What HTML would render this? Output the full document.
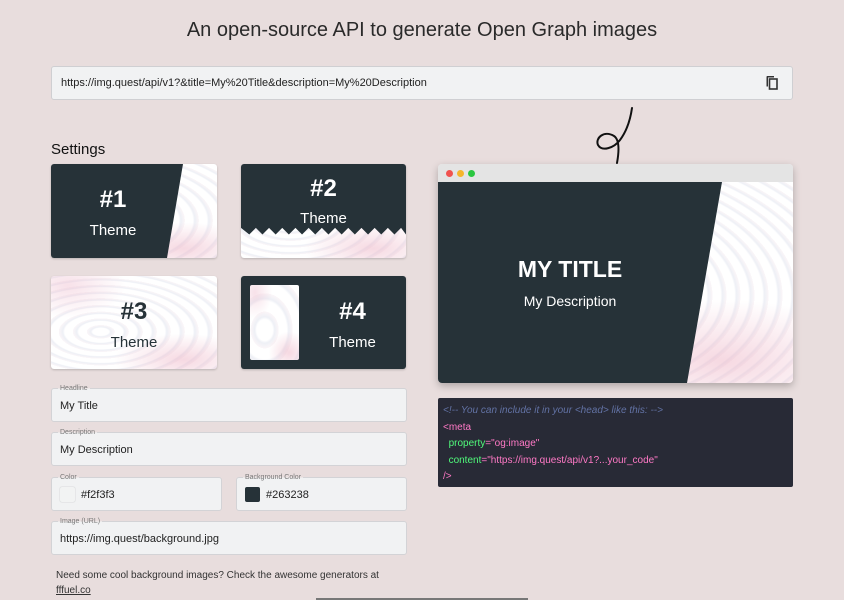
<!DOCTYPE html>
<html><head><meta charset="utf-8"><style>
*{box-sizing:border-box;margin:0;padding:0}
body{width:844px;height:600px;overflow:hidden;background:#e8dddd;font-family:"Liberation Sans",sans-serif;position:relative;color:#222}
.abs{position:absolute}
h1{position:absolute;top:19px;left:0;width:844px;text-align:center;font-weight:400;font-size:20px;color:#2a2a2a}
.url{left:51px;top:66px;width:742px;height:34px;background:#f1f2f3;border:1px solid #cfcfd2;border-radius:3px;font-size:11px;line-height:32px;padding-left:9px;color:#222}
.wave{background:
radial-gradient(ellipse 60% 40% at 80% 90%,rgba(235,170,190,.45),transparent 70%),
radial-gradient(ellipse 50% 50% at 10% 10%,rgba(236,180,200,.4),transparent 70%),
repeating-radial-gradient(ellipse at 30% 60%,#fff 0 8px,#eef0f6 10px,#fbf6f8 14px),#fff}
.card{border-radius:3px;overflow:hidden;box-shadow:0 1px 2px rgba(0,0,0,.2)}
.dark{background:#263238;color:#fff}
.num{position:absolute;width:100%;text-align:center;font-weight:700;font-size:24px}
.th{position:absolute;width:100%;text-align:center;font-size:15px}
.field{position:absolute;background:#f1f2f3;border:1px solid #d3d3d6;border-radius:3px;font-size:11px;padding-left:8px;color:#222;line-height:34px}
.field label{position:absolute;top:-5px;left:6px;font-size:7px;line-height:9px;height:9px;color:#777;background:linear-gradient(#e8dddd 50%,#f1f2f3 50%);padding:0 2px}
.sw{display:inline-block;width:15px;height:15px;border-radius:2px;vertical-align:middle;margin:-2px 6px 0 0}
.code{left:438px;top:398px;width:355px;height:89px;background:#282a36;border-radius:2px;font-size:10px;padding:5px 5px;line-height:16.5px}
</style></head><body>
<h1>An open-source API to generate Open Graph images</h1>
<div class="abs url">https://img.quest/api/v1?&amp;title=My%20Title&amp;description=My%20Description
<svg class="abs" style="left:713px;top:8px" width="14" height="16" viewBox="0 0 14 16"><path d="M2 1h7v1.5H3v9H1.5V2.5Q1.5 1 2 1z" fill="#333"/><rect x="4.5" y="4" width="7.5" height="10" fill="none" stroke="#333" stroke-width="1.6"/></svg></div>
<svg class="abs" style="left:590px;top:100px" width="50" height="70"><path d="M42 8C40 22 36 32 30 40C24 48 12 52 8 45C5 38 14 30 24 36C30 40 29 52 27 63" fill="none" stroke="#111" stroke-width="2" stroke-linecap="round"/></svg>
<div class="abs" style="left:51px;top:141px;font-size:15px;color:#111">Settings</div>
<div class="abs card wave" style="left:51px;top:164px;width:166px;height:94px">
<div class="abs dark" style="left:0;top:0;width:100%;height:100%;clip-path:polygon(0 0,132px 0,116px 100%,0 100%)"></div>
<div class="num" style="top:22px;width:124px;color:#fff">#1</div><div class="th" style="top:58px;width:124px;color:#fff">Theme</div></div>
<div class="abs card wave" style="left:241px;top:164px;width:165px;height:94px">
<div class="abs dark" style="left:0;top:0;width:100%;height:100%;clip-path:polygon(0 0,100% 0,100% 75%,97% 68%,93% 75%,89% 68%,85% 75%,81% 68%,77% 75%,73% 68%,69% 75%,65% 68%,61% 75%,57% 68%,53% 75%,49% 68%,45% 75%,41% 68%,37% 75%,33% 68%,29% 75%,25% 68%,21% 75%,17% 68%,13% 75%,9% 68%,5% 75%,0 68%)"></div>
<div class="num" style="top:11px;color:#fff">#2</div><div class="th" style="top:46px;color:#fff">Theme</div></div>
<div class="abs card wave" style="left:51px;top:276px;width:166px;height:93px">
<div class="num" style="top:22px;color:#263238">#3</div><div class="th" style="top:58px;color:#263238">Theme</div></div>
<div class="abs card dark" style="left:241px;top:276px;width:165px;height:93px">
<div class="abs wave" style="left:9px;top:9px;width:49px;height:75px;border-radius:2px"></div>
<div class="num" style="top:22px;left:58px;width:107px">#4</div><div class="th" style="top:58px;left:58px;width:107px">Theme</div></div>
<div class="field" style="left:51px;top:388px;width:356px;height:34px"><label>Headline</label>My Title</div>
<div class="field" style="left:51px;top:432px;width:356px;height:34px"><label>Description</label>My Description</div>
<div class="field" style="left:51px;top:477px;width:171px;height:34px"><label>Color</label><span class="sw" style="background:#f2f3f3;box-shadow:0 0 1px #aaa"></span>#f2f3f3</div>
<div class="field" style="left:236px;top:477px;width:171px;height:34px"><label>Background Color</label><span class="sw" style="background:#263238"></span>#263238</div>
<div class="field" style="left:51px;top:521px;width:356px;height:34px"><label>Image (URL)</label>https://img.quest/background.jpg</div>
<div class="abs" style="left:56px;top:568px;font-size:10px;color:#333;line-height:15px">Need some cool background images? Check the awesome generators at<br><u>fffuel.co</u></div>
<div class="abs" style="left:316px;top:598px;width:212px;height:2px;background:#777"></div>
<div class="abs card wave" style="left:438px;top:164px;width:355px;height:219px;box-shadow:0 3px 8px rgba(0,0,0,.25);border-radius:4px">
<div class="abs" style="left:0;top:0;width:100%;height:18px;background:#e4e4e4"></div>
<div class="abs" style="left:8px;top:6px;width:7px;height:7px;border-radius:50%;background:#f0524f"></div>
<div class="abs" style="left:19px;top:6px;width:7px;height:7px;border-radius:50%;background:#f5b52b"></div>
<div class="abs" style="left:30px;top:6px;width:7px;height:7px;border-radius:50%;background:#2bc640"></div>
<div class="abs dark" style="left:0;top:18px;width:100%;height:201px;clip-path:polygon(0 0,284px 0,249px 100%,0 100%)"></div>
<div class="abs" style="left:0;top:92px;width:264px;text-align:center;color:#fff;font-size:23px;font-weight:700">MY TITLE</div>
<div class="abs" style="left:0;top:129px;width:264px;text-align:center;color:#fff;font-size:14px">My Description</div>
</div>
<div class="abs code"><span style="color:#6272a4;font-style:italic">&lt;!-- You can include it in your &lt;head&gt; like this: --&gt;</span><br><span style="color:#ff79c6">&lt;meta</span><br>&nbsp;&nbsp;<span style="color:#50fa7b">property</span><span style="color:#ff79c6">="og:image"</span><br>&nbsp;&nbsp;<span style="color:#50fa7b">content</span><span style="color:#ff79c6">="https://img.quest/api/v1?...your_code"</span><br><span style="color:#ff79c6">/&gt;</span></div>
</body></html>
